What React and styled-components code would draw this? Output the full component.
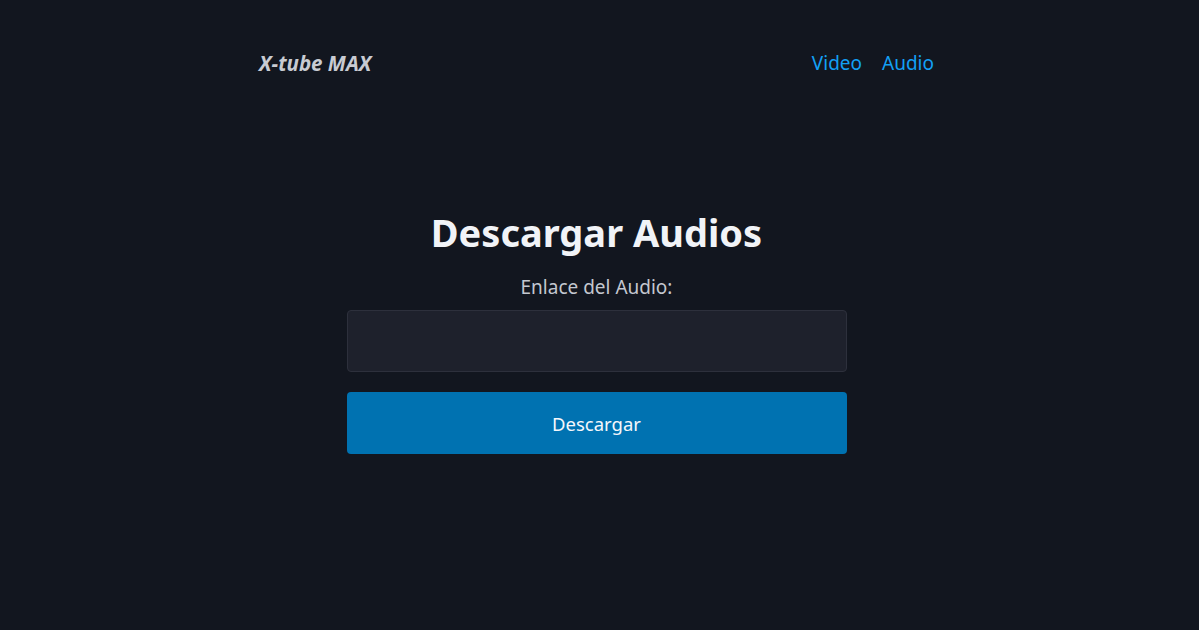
import React from "react";
import styled, { createGlobalStyle } from "styled-components";

const GlobalStyle = createGlobalStyle`
  html, body {
    margin: 0;
    padding: 0;
    background: #12161f;
    font-family: "Noto Sans", "Open Sans", sans-serif;
  }
`;

const Page = styled.div`
  min-height: 630px;
  padding: 0 265px 0 259px;
  box-sizing: border-box;
`;

const Header = styled.header`
  height: 126px;
  display: flex;
  align-items: center;
  justify-content: space-between;
`;

const Logo = styled.a`
  color: #c8cbd2;
  font-size: 20.5px;
  font-weight: 700;
  font-style: italic;
  text-decoration: none;
`;

const Nav = styled.nav`
  display: flex;
  gap: 20px;
`;

const NavLink = styled.a`
  color: #12a0f5;
  font-size: 19px;
  text-decoration: none;
`;

const Main = styled.main`
  display: flex;
  flex-direction: column;
  align-items: center;
  padding-top: 80px;
`;

const Title = styled.h1`
  margin: 0;
  color: #f1f3f7;
  font-size: 38px;
  font-weight: 700;
  line-height: 52px;
`;

const Form = styled.form`
  width: 500px;
  display: flex;
  flex-direction: column;
  align-items: center;
  margin-top: 16px;
`;

const Label = styled.label`
  color: #c4c8d0;
  font-size: 19px;
  line-height: 26px;
  margin-bottom: 10px;
`;

const Input = styled.input`
  width: 100%;
  height: 62px;
  box-sizing: border-box;
  background: #1e212c;
  border: 1px solid #2d303c;
  border-radius: 4px;
  color: #e5e7eb;
  font-size: 18px;
  padding: 0 16px;
  outline: none;
`;

const Button = styled.button`
  width: 100%;
  height: 62px;
  margin-top: 20px;
  background: #0072b1;
  border: none;
  border-radius: 4px;
  color: #f4f7fb;
  font-family: inherit;
  font-size: 18.5px;
  cursor: pointer;
`;

export default function App() {
  return (
    <Page>
      <GlobalStyle />
      <Header>
        <Logo href="#">X-tube MAX</Logo>
        <Nav>
          <NavLink href="#">Video</NavLink>
          <NavLink href="#">Audio</NavLink>
        </Nav>
      </Header>
      <Main>
        <Title>Descargar Audios</Title>
        <Form onSubmit={(e) => e.preventDefault()}>
          <Label htmlFor="url">Enlace del Audio:</Label>
          <Input id="url" type="text" />
          <Button type="submit">Descargar</Button>
        </Form>
      </Main>
    </Page>
  );
}
